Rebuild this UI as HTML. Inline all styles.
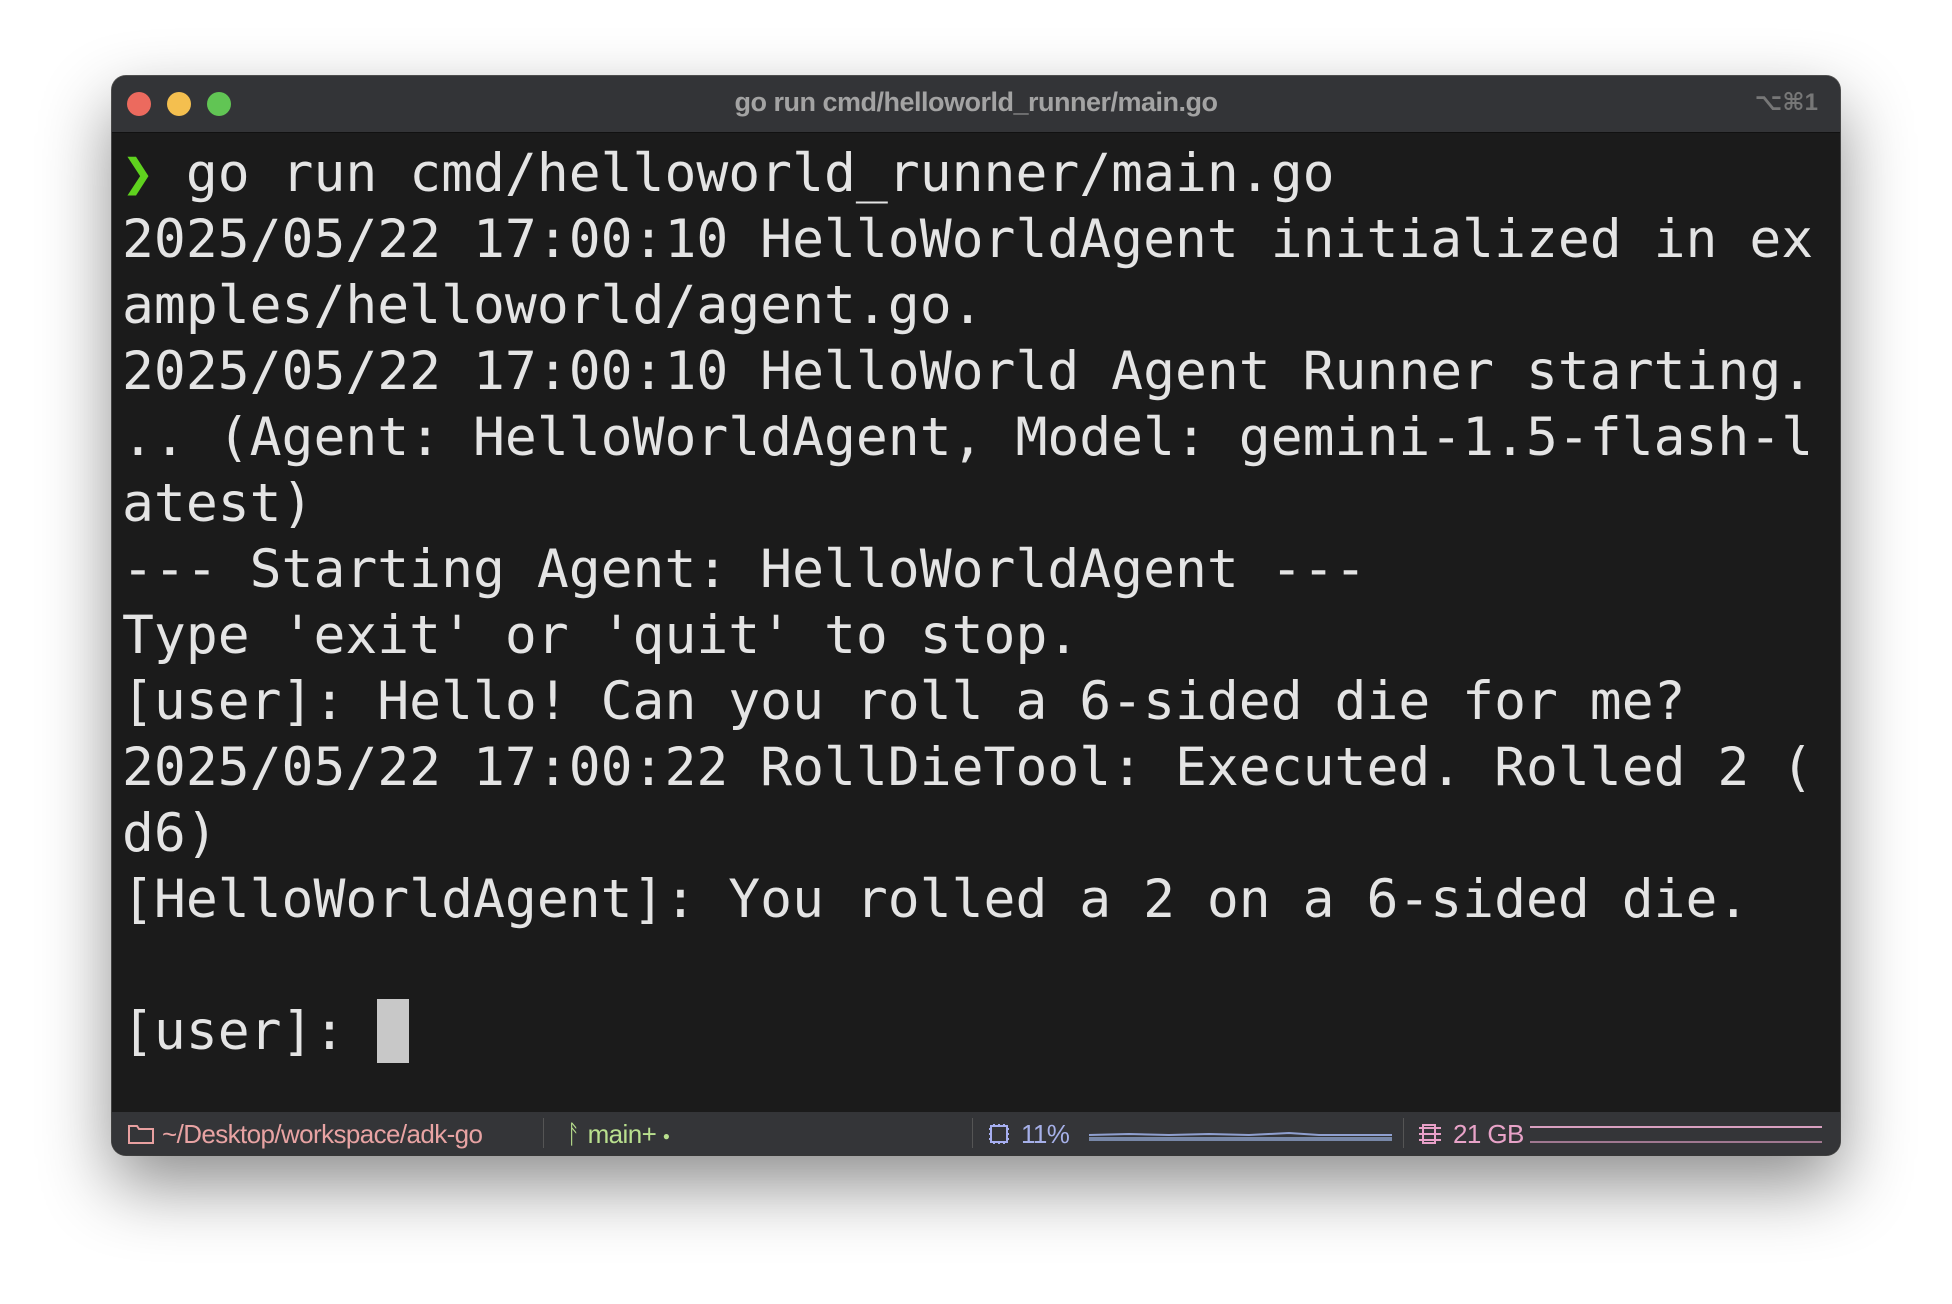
<!DOCTYPE html>
<html><head><meta charset="utf-8"><style>
html,body{margin:0;padding:0;background:#fff;width:1952px;height:1304px;overflow:hidden}
.win{position:absolute;left:112px;top:76px;width:1728px;height:1079px;border-radius:14px;background:#1b1b1b;overflow:hidden;box-shadow:0 30px 70px rgba(0,0,0,.45),0 0 0 1px #555;}
.title{position:absolute;left:0;top:0;width:100%;height:56px;background:#333437;border-bottom:1px solid #111;}
.dot{position:absolute;top:16px;width:24px;height:24px;border-radius:50%}
.ttl{position:absolute;left:0;width:100%;top:11px;text-align:center;font:bold 27px "Liberation Sans",sans-serif;color:#a3a3a3;letter-spacing:-0.5px}
.kbd{position:absolute;right:22px;top:12px;font:bold 24px "Liberation Sans","DejaVu Sans",sans-serif;color:#777}
.term{position:absolute;left:10px;top:65px;font-family:"DejaVu Sans Mono",monospace;font-size:53px;line-height:66px;color:#e4e4e4;white-space:pre}
.status{position:absolute;left:0;top:1036px;width:100%;height:43px;background:#343538;font:26px "Liberation Sans",sans-serif;letter-spacing:-0.6px}
.status span{position:absolute;top:7px}
.div{position:absolute;top:6px;width:1px;height:30px;background:#555}
</style></head><body>
<div class="win">
<div class="title">
<div class="dot" style="left:15px;background:#ec6a5e"></div>
<div class="dot" style="left:55px;background:#f4bf4f"></div>
<div class="dot" style="left:95px;background:#61c554"></div>
<div class="ttl">go run cmd/helloworld_runner/main.go</div>
<div class="kbd">⌥⌘1</div>
</div>
<div class="term"><span style="color:#5fd21e">❯</span> go run cmd/helloworld_runner/main.go
2025/05/22 17:00:10 HelloWorldAgent initialized in ex
amples/helloworld/agent.go.
2025/05/22 17:00:10 HelloWorld Agent Runner starting.
.. (Agent: HelloWorldAgent, Model: gemini-1.5-flash-l
atest)
--- Starting Agent: HelloWorldAgent ---
Type 'exit' or 'quit' to stop.
[user]: Hello! Can you roll a 6-sided die for me?
2025/05/22 17:00:22 RollDieTool: Executed. Rolled 2 (
d6)
[HelloWorldAgent]: You rolled a 2 on a 6-sided die.

[user]: <span style="display:inline-block;width:32px;height:64px;background:#c8c8c8;vertical-align:-14px"></span></div>
<div class="status">
<svg style="position:absolute;left:16px;top:12px" width="26" height="20"><path d="M1 2h8l2 3h14v14H1z" fill="none" stroke="#e8a0a0" stroke-width="2"/></svg>
<span style="left:50px;color:#e8a3a3">~/Desktop/workspace/adk-go</span>
<div class="div" style="left:431px"></div>
<span style="left:454px;color:#b9e08e">ᚨ main+ <span style="position:static;font-size:12px;vertical-align:3px">●</span></span>
<div class="div" style="left:860px"></div>
<svg style="position:absolute;left:875px;top:10px" width="24" height="24"><rect x="4" y="4" width="16" height="16" fill="none" stroke="#a6aef0" stroke-width="2"/><path d="M2 7h2M2 12h2M2 17h2M20 7h2M20 12h2M20 17h2M7 2v2M12 2v2M17 2v2M7 20v2M12 20v2M17 20v2" stroke="#a6aef0" stroke-width="2"/></svg>
<span style="left:909px;color:#a6b0e8">11%</span>
<svg style="position:absolute;left:977px;top:14px" width="303" height="16"><path d="M0 9 L40 8 L80 9 L120 8 L160 9 L200 7 L230 9 L303 9" fill="none" stroke="#8fa0d0" stroke-width="2"/><rect x="0" y="11" width="303" height="4" fill="#7888a8"/></svg>
<div class="div" style="left:1291px"></div>
<svg style="position:absolute;left:1305px;top:10px" width="24" height="24"><rect x="6" y="3" width="12" height="18" fill="none" stroke="#e8a0c8" stroke-width="2"/><path d="M2 6h22M2 12h22M2 18h22" stroke="#e8a0c8" stroke-width="2"/></svg>
<span style="left:1341px;color:#e8a3c8">21 GB</span>
<svg style="position:absolute;left:1418px;top:10px" width="292" height="24"><path d="M0 5H292" stroke="#d8a0c0" stroke-width="2"/><path d="M0 20H292" stroke="#a07890" stroke-width="2"/></svg>
</div>
</div>
</body></html>
